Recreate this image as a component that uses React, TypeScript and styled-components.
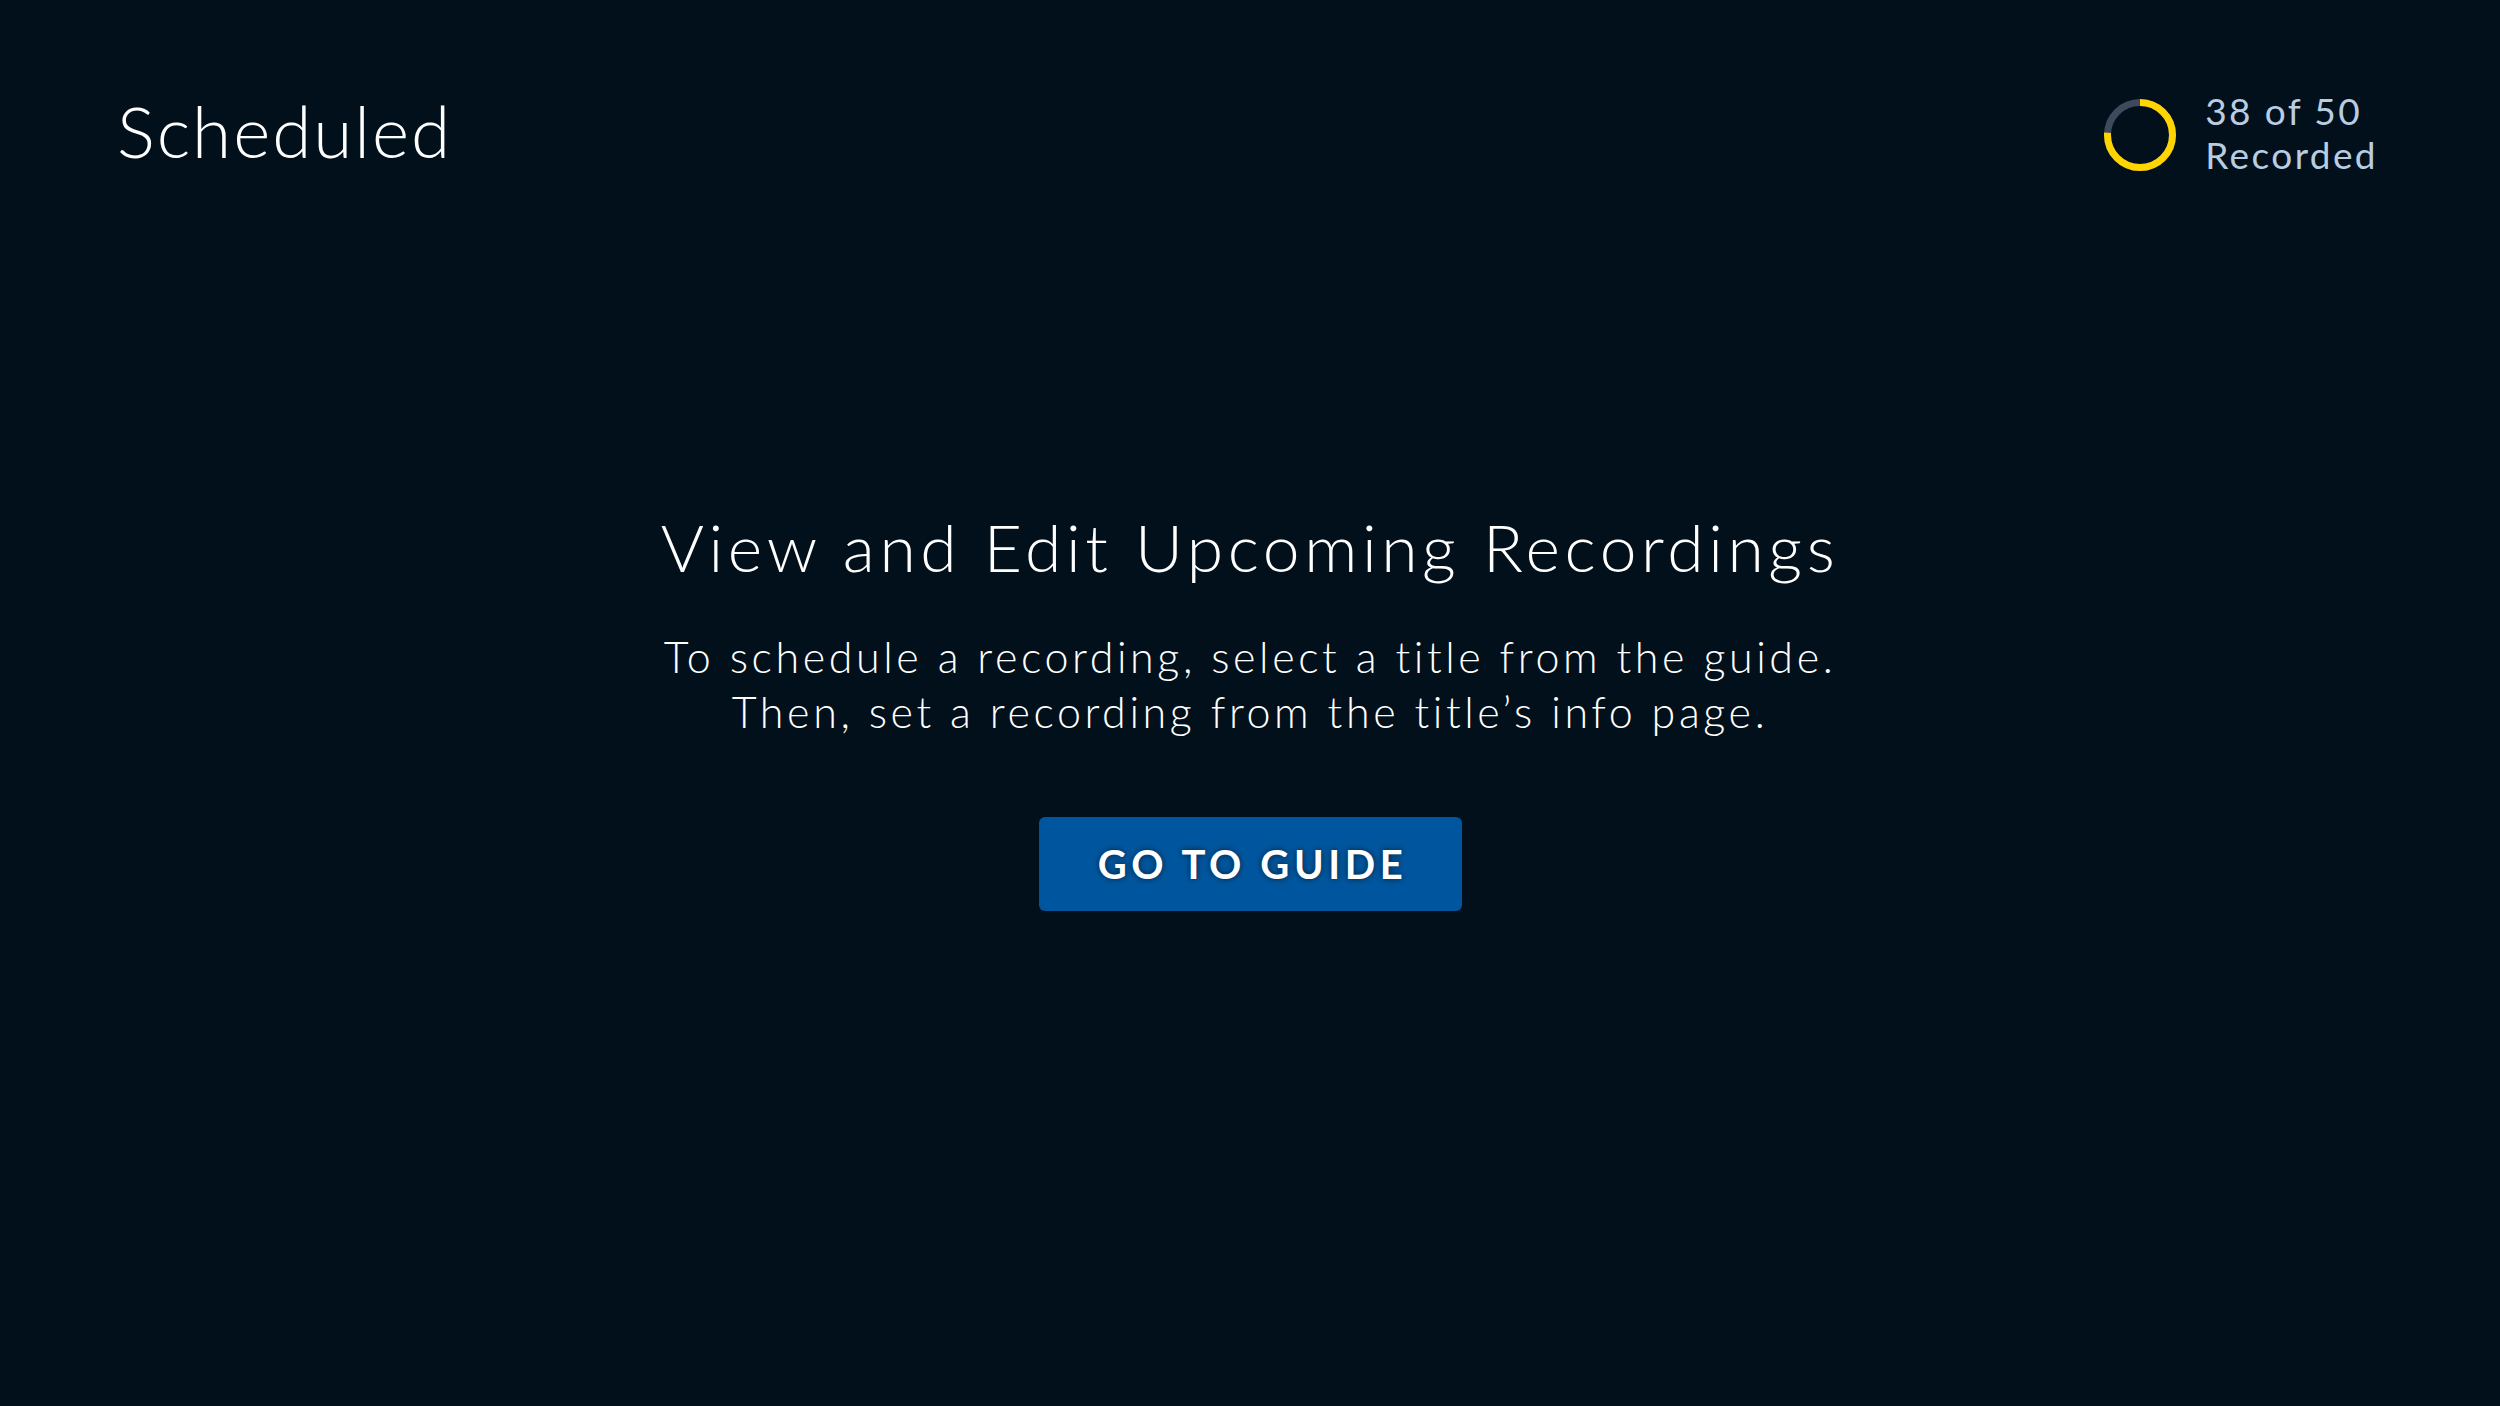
import React from "react";
import styled, { createGlobalStyle } from "styled-components";

const Global = createGlobalStyle`
  html, body { margin: 0; padding: 0; background: #01101a; }
  body { font-family: Lato, "Open Sans", sans-serif; }
  #root { min-height: 100vh; }
`;

const Page = styled.div`
  width: 2500px;
  height: 1406px;
  background: #01101a;
  color: #ffffff;
  display: flex;
  flex-direction: column;
  box-sizing: border-box;
  overflow: hidden;
`;

const Header = styled.header`
  display: flex;
  justify-content: space-between;
  align-items: flex-start;
  padding: 96px 122px 0 117px;
`;

const PageTitle = styled.h1`
  margin: 0;
  font-size: 71px;
  line-height: 70px;
  font-weight: 300;
  color: #ffffff;
  letter-spacing: 2px;
`;

const Quota = styled.div`
  display: flex;
  align-items: center;
  gap: 29px;
  margin-top: -4px;
`;

const QuotaText = styled.div`
  font-size: 37px;
  line-height: 44px;
  color: #b9cde2;
  font-weight: 400;
  letter-spacing: 2.4px;
  margin-top: -3px;
`;

const Main = styled.main`
  display: flex;
  flex-direction: column;
  align-items: center;
  padding-top: 330px;
`;

const Heading = styled.h2`
  margin: 0;
  font-size: 66px;
  line-height: 80px;
  font-weight: 300;
  color: #ffffff;
  letter-spacing: 4.6px;
`;

const Body = styled.p`
  margin: 42px 0 0;
  font-size: 43px;
  line-height: 55px;
  font-weight: 300;
  color: #ffffff;
  text-align: center;
  letter-spacing: 3.6px;
`;

const Button = styled.button`
  margin-top: 78px;
  width: 423px;
  height: 94px;
  border: none;
  border-radius: 6px;
  background: #00569e;
  color: #ffffff;
  font-family: Lato, "Open Sans", sans-serif;
  font-size: 40px;
  font-weight: 700;
  letter-spacing: 4.6px;
  padding: 0 0 0 5px;
  text-shadow: 0 0 6px rgba(0, 0, 0, 0.6);
  cursor: pointer;
`;

function Ring({ value, total }: { value: number; total: number }) {
  const size = 72;
  const stroke = 7;
  const r = (size - stroke) / 2;
  const c = 2 * Math.PI * r;
  const frac = value / total;
  return (
    <svg width={size} height={size} viewBox={`0 0 ${size} ${size}`}>
      <circle cx={size / 2} cy={size / 2} r={r} fill="none" stroke="#3e4a5c" strokeWidth={stroke} />
      <circle
        cx={size / 2}
        cy={size / 2}
        r={r}
        fill="none"
        stroke="#ffd400"
        strokeWidth={stroke}
        strokeDasharray={`${c * frac} ${c}`}
        transform={`rotate(-90 ${size / 2} ${size / 2})`}
      />
    </svg>
  );
}

export default function App() {
  return (
    <Page>
      <Global />
      <Header>
        <PageTitle>Scheduled</PageTitle>
        <Quota>
          <Ring value={38} total={50} />
          <QuotaText>
            38 of 50
            <br />
            Recorded
          </QuotaText>
        </Quota>
      </Header>
      <Main>
        <Heading>View and Edit Upcoming Recordings</Heading>
        <Body>
          To schedule a recording, select a title from the guide.
          <br />
          Then, set a recording from the title’s info page.
        </Body>
        <Button>GO TO GUIDE</Button>
      </Main>
    </Page>
  );
}
